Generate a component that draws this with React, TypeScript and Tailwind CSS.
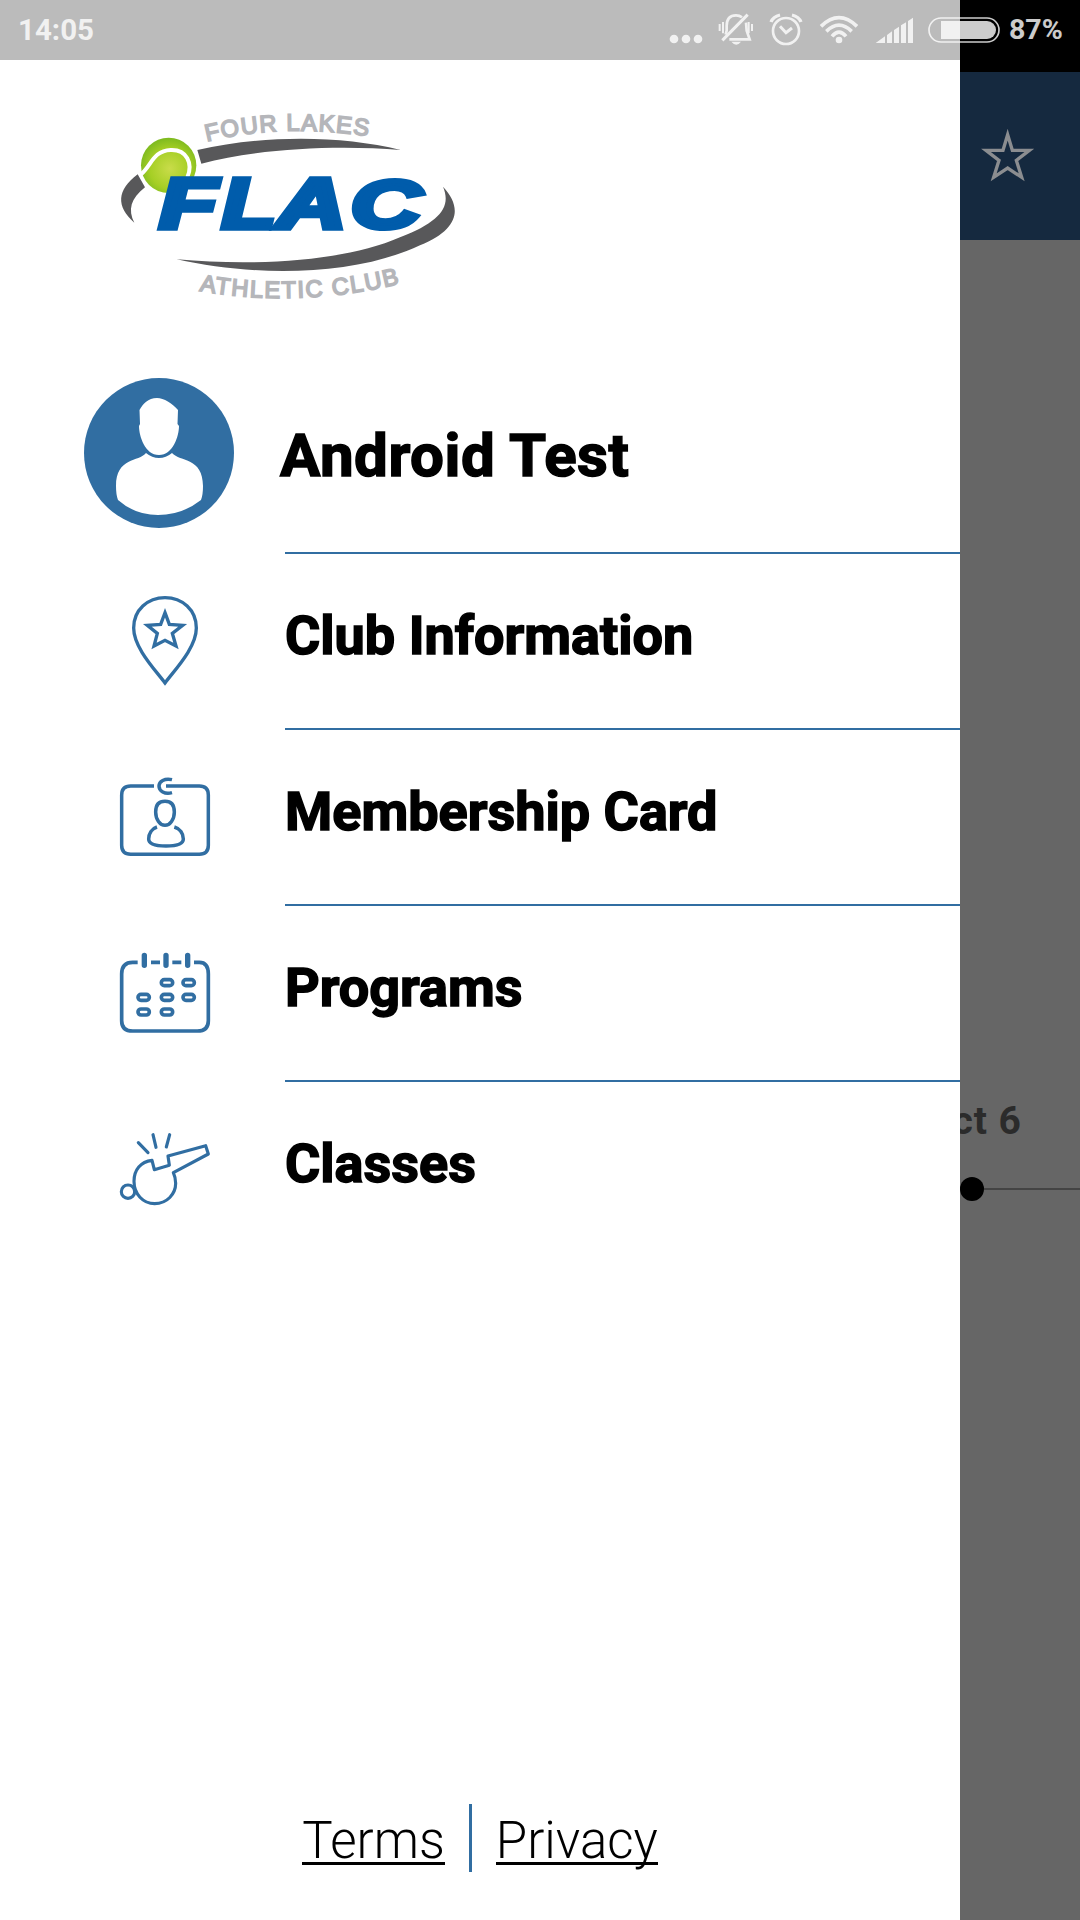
import type { ReactNode } from "react";

const STROKE = "#316ea2";

function PinIcon() {
  return (
    <svg viewBox="60 42 270 270" className="w-[90px] h-[90px] overflow-visible" fill="none" stroke={STROKE} strokeWidth="10">
      <path d="M195 309 C170 274 101 205 101 144 C101 90 143 53 195 53 C247 53 289 90 289 144 C289 205 220 274 195 309 Z" />
      <path d="M195 98 L208 133 L248 136 L217 160 L228 198 L195 181 L162 198 L172 160 L142 136 L182 133 Z" />
    </svg>
  );
}

function CardIcon() {
  return (
    <svg viewBox="60 30 270 270" className="w-[90px] h-[90px] overflow-visible" fill="none" stroke={STROKE} strokeWidth="10.5">
      <path d="M162 78 H92 Q65 78 65 105 V256 Q65 283 92 283 H298 Q325 283 325 256 V105 Q325 78 298 78 H198" />
      <path d="M216 59 C194 54 177 64 177 78 C177 93 194 104 216 98" />
      <path d="M195 124 C174 124 167 139 167 156 C167 178 180 196 195 196 C210 196 223 178 223 156 C223 139 216 124 195 124 Z" />
      <path d="M171 201 C155 206 146 221 146 237 C146 252 166 258 198 258 C230 258 250 252 250 237 C250 221 240 206 223 201" />
    </svg>
  );
}

const DAYS = [
  [201, 158],
  [266, 158],
  [131, 202],
  [201, 202],
  [266, 202],
  [131, 246],
  [201, 246],
];

function CalendarIcon() {
  return (
    <svg viewBox="60 48 270 270" className="w-[90px] h-[90px] overflow-visible" fill="none" stroke={STROKE} strokeWidth="11">
      <path d="M113 97 H98 Q65 97 65 132 V272 Q65 303 98 303 H292 Q325 303 325 272 V132 Q325 97 298 97 H282" />
      <path d="M153 97 H180 M217 97 H244" />
      <path d="M133 76 V106 M198 76 V106 M263 76 V106" strokeWidth="16" strokeLinecap="round" />
      {DAYS.map(([x, y]) => (
        <rect key={`${x}-${y}`} x={x - 17} y={y - 9} width="34" height="18" rx="9" />
      ))}
    </svg>
  );
}

function WhistleIcon() {
  return (
    <svg viewBox="60 36 270 270" className="w-[90px] h-[90px] overflow-visible" fill="none" stroke={STROKE} strokeWidth="9.5" strokeLinejoin="round">
      <circle cx="84" cy="245" r="20" />
      <path d="M156 151 C122 155 102 180 102 214 C102 252 129 281 164 281 C201 281 227 252 227 220 Q227 203 220 188 L325 132 L317 107 L204 138 L208 166 L163 179 Z" />
      <g strokeLinecap="round">
        <path d="M115 98 L144 128" />
        <path d="M159 74 L168 112" />
        <path d="M209 74 L199 111" />
      </g>
    </svg>
  );
}

const MENU: { label: string; icon: ReactNode }[] = [
  { label: "Club Information", icon: <PinIcon /> },
  { label: "Membership Card", icon: <CardIcon /> },
  { label: "Programs", icon: <CalendarIcon /> },
  { label: "Classes", icon: <WhistleIcon /> },
];

function Logo() {
  return (
    <svg viewBox="0 0 1140 690" className="w-[380px] h-[230px]">
      <defs>
        <radialGradient id="ball" cx="0.52" cy="0.56" r="0.55">
          <stop offset="0" stopColor="#c9dc4a" />
          <stop offset="0.65" stopColor="#a6cf25" />
          <stop offset="1" stopColor="#7fbb1f" />
        </radialGradient>
        <path id="arcTop" d="M320 155 Q560 96 830 143" />
        <path id="arcBottom" d="M298 602 Q600 656 910 578" />
      </defs>
      <g fill="#58585a">
        <path d="M292 180 C490 135 720 135 902 180 C710 165 480 175 304 221 Z" />
        <path d="M113 253 C50 300 48 350 103 398 C83 360 92 325 135 292 Z" />
        <path d="M1029 290 C1085 350 1083 415 960 466 C760 560 460 560 230 508 C480 530 740 512 900 442 C1020 395 1055 350 1029 290 Z" />
      </g>
      <circle cx="206" cy="226" r="83" fill="url(#ball)" />
      <path d="M124 252 C155 225 160 182 212 180 C260 178 280 220 262 262" fill="none" stroke="#fff" strokeWidth="12" />
      <g
        fill="#005cab"
        stroke="#005cab"
        strokeWidth="16"
        fontFamily="'Liberation Sans', Arial, sans-serif"
        fontWeight="700"
        fontStyle="italic"
        fontSize="209"
      >
        <text transform="translate(178 415) scale(1.36 1)">F</text>
        <text transform="translate(365 415) scale(1.27 1)">L</text>
        <text transform="translate(530 415) scale(1.38 1)">A</text>
        <text transform="translate(752 413) scale(1.4 0.97)">C</text>
      </g>
      <g
        fill="#b5b6ba"
        stroke="#b5b6ba"
        strokeWidth="5"
        fontFamily="'Liberation Sans', Arial, sans-serif"
        fontSize="71"
      >
        <text>
          <textPath href="#arcTop" textLength="488">FOUR LAKES</textPath>
        </text>
        <text>
          <textPath href="#arcBottom" textLength="606">ATHLETIC CLUB</textPath>
        </text>
      </g>
    </svg>
  );
}

function Avatar() {
  return (
    <svg viewBox="0 0 150 150" className="w-[150px] h-[150px]">
      <circle cx="75" cy="75" r="75" fill="#316ea2" />
      <g fill="#fff">
        <path d="M73 20 C80 20 88 25 94 32 L93.5 46 L95 48 C95 58 89 77 75 77 C61 77 55 58 55 48 L56 46 L55.5 32 C59 26 64 20 73 20 Z" />
        <path d="M62 75 Q68 80 75 80 Q82 80 88 75 C96 84 119 79 119 108 Q119 117 117 122 Q98 137 74 137 Q51 137 34 122 Q32 117 32 108 C32 79 55 84 62 75 Z" />
      </g>
    </svg>
  );
}

function StatusBar() {
  return (
    <div className="absolute inset-x-0 top-0 h-[60px] flex items-center text-white opacity-80">
      <span className="ml-[18px] mt-[2px] text-[29.5px] leading-none font-bold w-[649px]">14:05</span>
      <svg viewBox="81 0 135 180" className="w-[45px] h-[60px] shrink-0" fill="currentColor">
        <circle cx="102" cy="117" r="13" />
        <circle cx="138" cy="117" r="13" />
        <circle cx="174" cy="117" r="13" />
      </svg>
      <svg viewBox="216 0 150 180" className="w-[50px] h-[60px] shrink-0" fill="none" stroke="currentColor" strokeWidth="8">
        <path d="M257 104 L260 92 V78 C260 55 271 46 288 46 C296 46 301 48 306 52" />
        <path d="M318 68 L320 92 L329 118 H268" />
        <path d="M247 121 L323 44" strokeWidth="9" />
        <path d="M274 125 H303 Q289 143 274 125 Z" fill="currentColor" stroke="none" />
        <path d="M239 72 V93 M249 66 V100 M326 66 V100 M336 72 V93" strokeWidth="6" />
      </svg>
      <svg viewBox="366 0 150 180" className="w-[50px] h-[60px] shrink-0" fill="none" stroke="currentColor" strokeWidth="8">
        <circle cx="438" cy="93" r="39" />
        <path d="M420 79 L438 98 L456 84" strokeWidth="9" />
        <path d="M393 66 Q399 50 420 45 M456 45 Q477 50 483 66" strokeWidth="10" />
      </svg>
      <svg viewBox="516 0 165 180" className="w-[55px] h-[60px] shrink-0" fill="none" stroke="currentColor" strokeWidth="11">
        <circle cx="597" cy="120" r="10" fill="currentColor" stroke="none" />
        <path d="M543 79 Q597 27 651 79" />
        <path d="M559 94 Q597 57 635 94" />
        <path d="M576 109 Q597 84 618 109" />
      </svg>
      <svg viewBox="681 0 165 180" className="w-[55px] h-[60px] shrink-0" fill="currentColor">
        <path d="M707 129 L735 109 V129 Z M741 129 V105 L756 94 V129 Z M762 129 V90 L777 80 V129 Z M783 129 V76 L798 67 V129 Z M804 129 V63 L819 53 V129 Z" />
      </svg>
      <svg viewBox="846 0 240 180" className="w-[80px] h-[60px] shrink-0">
        <rect x="867" y="54" width="210" height="72" rx="36" fill="none" stroke="currentColor" strokeWidth="5" />
        <path d="M903 63 H1041 A27 27 0 0 1 1041 117 H903 Z" fill="currentColor" />
      </svg>
      <span className="ml-[7px] mt-[1px] text-[28.5px] leading-none font-bold">87%</span>
    </div>
  );
}

// Dimmed page that stays visible to the right of the drawer
function PageBehind() {
  return (
    <div className="h-full flex flex-col bg-[#666]">
      <div className="h-[72px] bg-black" />
      <div className="h-[168px] bg-[#15293f] flex justify-end">
        <svg viewBox="150 235 165 165" className="w-[55px] h-[55px] mt-[56px] mr-[45px]" fill="none" stroke="#8b8d90" strokeWidth="10">
          <path d="M233 255 L247 302 L298 302 L259 332 L275 383 L233 355 L191 383 L207 332 L168 302 L219 302 Z" />
        </svg>
      </div>
      <p className="mt-[858px] mr-[58px] text-right text-[39px] leading-[46px] font-bold tracking-[1px] text-[#2b2b2b]">
        Oct 6
      </p>
      <div className="mt-[33px] ml-[960px] h-6 flex items-center">
        <span className="w-6 h-6 rounded-full bg-black" />
        <span className="h-[2px] flex-1 bg-[#444]" />
      </div>
    </div>
  );
}

function Drawer() {
  return (
    <aside className="absolute left-0 top-0 w-[960px] h-full bg-white flex flex-col">
      <div className="h-[60px] bg-[#bbb]" />
      <div className="mt-[30px] ml-[100px] h-[230px]">
        <Logo />
      </div>

      <div className="flex h-[234px]">
        <div className="ml-[84px] mt-[58px] w-[150px]">
          <Avatar />
        </div>
        <div className="ml-[51px] flex-1 border-b-2 border-[#316ea2]">
          <h1 className="-ml-[5px] mt-[100px] text-[60px] leading-[72px] font-bold tracking-[0.55px] whitespace-nowrap [-webkit-text-stroke:1.5px_black]">
            Android Test
          </h1>
        </div>
      </div>

      <nav>
        {MENU.map((item) => (
          <a key={item.label} className="group flex h-[176px]">
            <div className="ml-[120px] mt-10 w-[90px]">{item.icon}</div>
            <div className="ml-[75px] flex-1 border-b-2 border-[#316ea2] group-last:border-0">
              <span className="block mt-[50px] text-[54px] leading-[64px] font-bold whitespace-nowrap [-webkit-text-stroke:1.5px_black]">
                {item.label}
              </span>
            </div>
          </a>
        ))}
      </nav>

      <footer className="mt-auto mb-12 h-[68px] flex justify-center text-[51px] leading-[74px] font-light">
        <a className="h-[61px] border-b-[3px] border-black">Terms</a>
        <span className="mx-6 w-[3px] bg-[#316ea2]" />
        <a className="h-[61px] border-b-[3px] border-black">Privacy</a>
      </footer>
    </aside>
  );
}

export default function App() {
  return (
    <div className="relative w-[1080px] h-[1920px] overflow-hidden font-[Roboto,sans-serif] text-black">
      <PageBehind />
      <Drawer />
      <StatusBar />
    </div>
  );
}
